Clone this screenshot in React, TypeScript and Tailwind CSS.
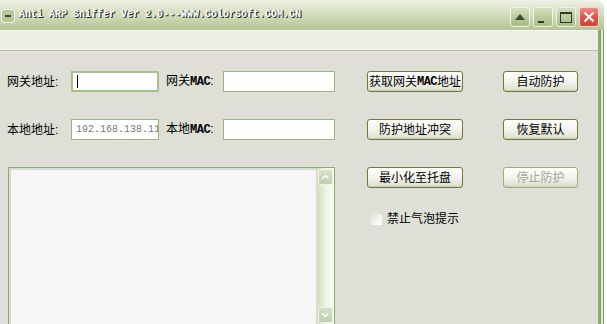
// Anti ARP Sniffer main window (XP olive theme)

const cjk = "[font-family:'Liberation_Sans','Noto_Sans_CJK_SC',sans-serif]";

const btn =
  "flex h-[21px] items-center justify-center whitespace-nowrap rounded-[3px] border border-[#6e7b3b] bg-gradient-to-b from-white via-[#f3f3ec] to-[#dcddd0] text-[12px] leading-none text-black shadow-[inset_0_-1px_0_#c9ccb8]";

const btnOff =
  "flex h-[21px] items-center justify-center whitespace-nowrap rounded-[3px] border border-[#a3ab78] bg-gradient-to-b from-white via-[#f3f3ec] to-[#dcddd0] text-[12px] leading-none text-[#a4a59c] shadow-[inset_0_-1px_0_#c9ccb8]";

const input = "h-[21px] border border-[#9cb384] bg-white";

const mac = "text-[12px] font-bold tracking-[-0.5px] [font-family:'Liberation_Mono',monospace]";

function TitleButton({ children, close }: { children: React.ReactNode; close?: boolean }) {
  return (
    <div
      className={
        close
          ? "flex h-[20px] w-[20px] items-center justify-center rounded-[3px] border border-[#f3d3cf] bg-gradient-to-b from-[#ef8a80] via-[#e0534a] to-[#d2443b]"
          : "flex h-[20px] w-[20px] items-center justify-center rounded-[3px] border border-[#eef2e4] bg-gradient-to-b from-[#d6dfc0] via-[#bccba0] to-[#a9bb88]"
      }
    >
      {children}
    </div>
  );
}

export default function App() {
  return (
    <div className={`h-[324px] w-[607px] overflow-hidden bg-white ${cjk}`}>
      <div className="flex w-[604px] flex-col">
        {/* TITLE BAR */}
        <div className="flex h-[30px] items-start rounded-tr-[8px] bg-gradient-to-b from-[#eef1e4] via-[#d3dcbd] to-[#b4c394]">
          <div className="ml-[1px] mt-[9px] flex h-[14px] w-[14px] items-center justify-center rounded-[3px] border border-[#f4f6ee] bg-[#b8c79a]">
            <div className="h-[2px] w-[6px] bg-[#3d4a2a]" />
          </div>
          <span className="ml-[4px] mt-[9px] text-[10px] font-bold leading-[12px] text-white [font-family:'Liberation_Mono',monospace] [text-shadow:1px_1px_0_#2a2a24,1px_0_0_#55584a]">
            Anti ARP Sniffer Ver 2.0---WWW.ColorSoft.COM.CN
          </span>
          <div className="ml-auto mr-[5px] mt-[7px] flex gap-[3px]">
            <TitleButton>
              <svg width="10" height="6" viewBox="0 0 10 6">
                <path d="M0 6 L5 0 L10 6 Z" fill="#3f4a30" />
              </svg>
            </TitleButton>
            <TitleButton>
              <div className="mr-[4px] mt-[9px] h-[2px] w-[6px] bg-[#2f3a22]" />
            </TitleButton>
            <TitleButton>
              <div className="h-[11px] w-[12px] border border-t-2 border-[#2f3a22]" />
            </TitleButton>
            <TitleButton close>
              <svg width="12" height="12" viewBox="0 0 12 12">
                <path d="M1.5 1.5 L10.5 10.5 M10.5 1.5 L1.5 10.5" stroke="white" strokeWidth="2.2" />
              </svg>
            </TitleButton>
          </div>
        </div>

        <div className="flex">
          <div className="flex w-[598px] flex-col">
            {/* STRIP */}
            <div className="h-[21px] border-t border-b border-t-[#f6f8f0] border-b-[#b9c3a6] bg-[#eceee3]" />

            {/* BODY */}
            <div className="h-[273px] bg-[#dfdfd7] pl-[7px] pt-[20px]">
              {/* ROW 1 */}
              <div className="flex h-[21px] items-center">
                <span className="w-[64px] text-[12px] leading-none">网关地址:</span>
                <div className="flex h-[21px] w-[88px] items-center border-2 border-[#a8c08a] bg-white pl-[4px]">
                  <div className="h-[13px] w-[1px] bg-black" />
                </div>
                <span className="ml-[7px] w-[57px] whitespace-nowrap text-[12px] leading-none">
                  网关<span className={mac}>MAC</span>:
                </span>
                <div className={`${input} w-[112px]`} />
                <div className={`${btn} ml-[32px] w-[96px]`}>
                  获取网关<span className={mac}>MAC</span>地址
                </div>
                <div className={`${btn} ml-[40px] w-[75px]`}>自动防护</div>
              </div>

              {/* ROW 2 */}
              <div className="mt-[27px] flex h-[21px] items-center">
                <span className="w-[64px] text-[12px] leading-none">本地地址:</span>
                <div className={`${input} flex w-[88px] items-center overflow-hidden whitespace-nowrap pl-[4px] text-[10px] text-[#7a7a7a] [font-family:'Liberation_Mono',monospace]`}>
                  192.168.138.11
                </div>
                <span className="ml-[7px] w-[57px] whitespace-nowrap text-[12px] leading-none">
                  本地<span className={mac}>MAC</span>:
                </span>
                <div className={`${input} w-[112px]`} />
                <div className={`${btn} ml-[32px] w-[96px]`}>防护地址冲突</div>
                <div className={`${btn} ml-[40px] w-[75px]`}>恢复默认</div>
              </div>

              {/* ROW 3 */}
              <div className="mt-[27px] flex items-start">
                {/* LOG LIST */}
                <div className="ml-[1px] flex h-[170px] w-[327px] border border-[#8eab6e] bg-[#f6f6f6]">
                  <div className="flex-1 border-l-2 border-t-2 border-r-2 border-[#dadad5] bg-[#f6f6f6]" />
                  <div className="flex w-[16px] flex-col bg-gradient-to-r from-[#d3e0c2] via-[#eef4e6] to-[#fafbf6] pt-[1px]">
                    <div className="flex h-[16px] w-[15px] items-center justify-center rounded-[2px] border border-[#eef3e6] bg-gradient-to-b from-[#d6e1c6] to-[#bfcfa9]">
                      <svg width="7" height="4" viewBox="0 0 7 4">
                        <path d="M0.5 3.5 L3.5 0.5 L6.5 3.5" stroke="white" strokeWidth="1.4" fill="none" />
                      </svg>
                    </div>
                    <div className="flex-1" />
                    <div className="mb-[13px] flex h-[16px] w-[15px] items-center justify-center rounded-[2px] border border-[#eef3e6] bg-gradient-to-b from-[#d6e1c6] to-[#bfcfa9]">
                      <svg width="7" height="4" viewBox="0 0 7 4">
                        <path d="M0.5 0.5 L3.5 3.5 L6.5 0.5" stroke="white" strokeWidth="1.4" fill="none" />
                      </svg>
                    </div>
                  </div>
                </div>

                {/* RIGHT COLUMN */}
                <div className="ml-[32px] flex flex-col">
                  <div className="flex">
                    <div className={`${btn} w-[96px]`}>最小化至托盘</div>
                    <div className={`${btnOff} ml-[40px] w-[75px]`}>停止防护</div>
                  </div>
                  <div className="ml-[4px] mt-[25px] flex items-center">
                    <div className="h-[11px] w-[11px] bg-gradient-to-br from-[#dfe2d6] via-[#f1f2ec] to-white" />
                    <span className="ml-[5px] text-[12px] leading-none">禁止气泡提示</span>
                  </div>
                </div>
              </div>
            </div>
          </div>

          {/* RIGHT FRAME */}
          <div className="w-[3px] bg-gradient-to-r from-[#9bb47c] to-[#7d9a5c]" />
          <div className="w-[2px] bg-[#e3eadb]" />
          <div className="w-[1px] bg-[#86a268]" />
        </div>
      </div>
    </div>
  );
}
